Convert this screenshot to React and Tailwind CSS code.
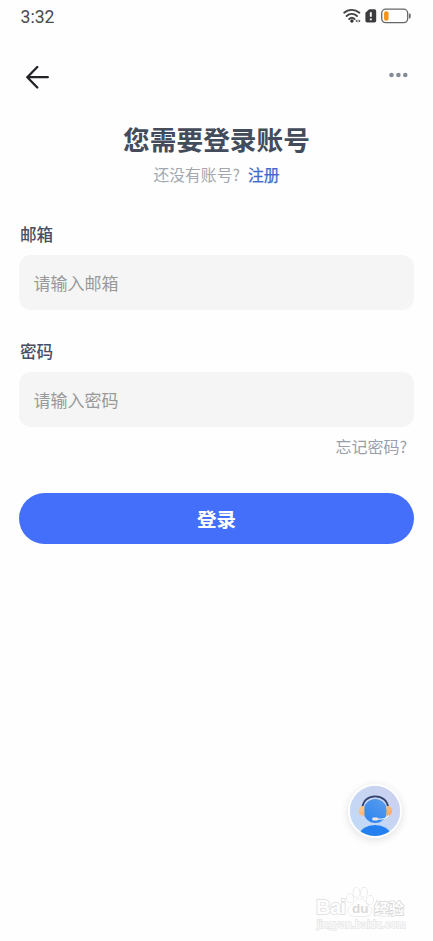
function StatusIcons() {
  return (
    <svg width="69" height="18" viewBox="0 0 69 18" fill="none">
      <g stroke="#444" strokeWidth="1.9" strokeLinecap="round">
        <path d="M2.2 5.7C6.400 1.900 13 1.900 17.400 5.700" />
        <path d="M4.600 9C7.600 6.200 12 6.200 15 9" />
        <path d="M7.200 12C8.800 10.500 11 10.500 12.600 12" />
      </g>
      <circle cx="9.900" cy="14" r="1.700" fill="#333" />
      <path d="M13.400 14l2-1.600v3.200zM18.600 14l-2-1.600v3.200z" fill="#444" />
      <path d="M27.200 2.200h5.200a1.800 1.800 0 0 1 1.800 1.800v9.700a1.800 1.800 0 0 1-1.800 1.800h-7.200a1.800 1.800 0 0 1-1.800-1.800V5.800z" fill="#3c3c3e" />
      <path d="M28.800 5.200v4.600M28.800 11.400v1.800" stroke="#fff" strokeWidth="1.900" />
      <rect x="39.700" y="2.200" width="26" height="13.400" rx="4" stroke="#666" strokeWidth="1.300" />
      <rect x="42" y="4.200" width="4.600" height="9.500" rx="2" fill="#f7941d" />
      <path d="M67.800 7.200v3.600" stroke="#666" strokeWidth="1.600" strokeLinecap="round" />
    </svg>
  );
}

function SupportAvatar() {
  return (
    <svg width="54" height="54" viewBox="2.500 2 54 54" className="rounded-full shadow-[0_2px_9px_rgba(0,0,0,0.12)]">
      <defs>
        <linearGradient id="sky" x1="0" y1="1" x2="1" y2="0">
          <stop offset="0" stopColor="#bfdcf8" />
          <stop offset="1" stopColor="#cdcfee" />
        </linearGradient>
        <linearGradient id="face" x1="1" y1="0" x2="0.2" y2="1">
          <stop offset="0" stopColor="#5c9dea" />
          <stop offset="1" stopColor="#2e85f3" />
        </linearGradient>
        <linearGradient id="pad" x1="0" y1="0" x2="1" y2="1">
          <stop offset="0" stopColor="#fbcb90" />
          <stop offset="1" stopColor="#f5a95c" />
        </linearGradient>
        <clipPath id="disc"><circle cx="29.500" cy="29" r="25" /></clipPath>
      </defs>
      <circle cx="29.500" cy="29" r="27" fill="#fff" />
      <circle cx="29.500" cy="29" r="25.200" fill="url(#sky)" />
      <g clipPath="url(#disc)">
        <ellipse cx="29.500" cy="52" rx="15" ry="9" fill="#2480ef" />
      </g>
      <ellipse cx="29.800" cy="29" rx="11.700" ry="12" fill="url(#face)" />
      <path d="M17 25.500C17.500 18.500 23 14.300 29.700 14.300S42 18.500 42.600 25.500" fill="none" stroke="#33436e" strokeWidth="1.800" />
      <path d="M18.900 24v9.600c-3.400.4-5.700-1.400-5.700-4.900s2.300-5 5.700-4.700zM40.900 24v9.600c3.400.4 5.800-1.400 5.800-4.900s-2.400-5-5.800-4.700z" fill="url(#pad)" />
      <path d="M43 33.500c-1.800 3-5 3.900-10.500 3.600" fill="none" stroke="#fff" strokeWidth="1" />
      <rect x="26.700" y="35.400" width="6" height="3" rx="1.300" fill="#f5e7df" />
    </svg>
  );
}

function Watermark() {
  return (
    <div className="flex flex-col text-[#fefefe] font-['Liberation_Sans','Noto_Sans_CJK_SC',sans-serif] [paint-order:stroke_fill]">
      <div className="flex h-[31px] items-end">
        <span className="w-[33px] pl-px text-[20px] leading-[19px] font-bold tracking-[-0.500px] [-webkit-text-stroke:1.600px_#dedede]">Bai</span>
        <svg width="24" height="30" viewBox="32.500 0 24 30" className="overflow-visible" fill="#fefefe" stroke="#dadada" strokeWidth="1">
          <ellipse cx="34.700" cy="11.300" rx="3.300" ry="4.400" transform="rotate(-12 34.700 11.300)" />
          <ellipse cx="41" cy="5.500" rx="3.200" ry="4.700" />
          <ellipse cx="48.500" cy="5.500" rx="3.300" ry="4.700" transform="rotate(8 48.500 5.500)" />
          <ellipse cx="54.500" cy="13" rx="3.200" ry="4.300" transform="rotate(12 54.500 13)" />
          <path d="M44.500 12c-4 0-5 3-7.500 5.500-2.800 2.500-4.800 4-4 7.500 1 4 4.500 4 11.500 4s10.500 0 11.500-4c.8-3.500-1.500-5-4-7.500-2.500-2.500-3.500-5.500-7.500-5.500z" />
          <text x="36.500" y="26.200" fontSize="13.500" fontWeight="700" fill="#dadada" stroke="none">du</text>
        </svg>
        <span className="pl-[2px] text-[15px] leading-[17px] font-bold whitespace-nowrap [-webkit-text-stroke:1.400px_#d6d6d6]">经验</span>
      </div>
      <span className="pl-[2px] text-[11px] leading-[15px] whitespace-nowrap [-webkit-text-stroke:1.300px_#e4e4e4]">jingyan.baidu.com</span>
    </div>
  );
}

function Field({ label, placeholder, type }) {
  return (
    <label className="flex flex-col gap-[9px]">
      <span className="pl-px text-[16.600px] leading-6 font-medium text-[#464f62]">{label}</span>
      <input
        type={type}
        placeholder={placeholder}
        className="h-[55px] w-full rounded-xl bg-[#f5f5f5] px-[14.500px] text-[17px] outline-none placeholder:text-[#999]"
      />
    </label>
  );
}

export default function App() {
  return (
    <div className="flex h-[941px] w-[433px] flex-col overflow-hidden bg-[#fefefe] font-['Noto_Sans_CJK_SC',sans-serif]">
      <header className="flex flex-col">
        <div className="flex h-8 items-center justify-between pr-[22px] pl-[20.500px]">
          <span className="pt-px font-['Roboto',sans-serif] text-[17.600px] leading-8 text-[#4a4a4a]">3:32</span>
          <StatusIcons />
        </div>
        <div className="flex h-[88px] items-center justify-between px-[25px] pt-px">
          <svg width="25" height="24" viewBox="0 0 25 24" fill="none" stroke="#222327" strokeWidth="2.300" strokeLinecap="round" strokeLinejoin="round">
            <path d="M12.300 2 2.300 12.200l10 10.300M2.300 12.200h20.500" />
          </svg>
          <svg width="19" height="6" viewBox="0 0 19 6" fill="#858c97" className="mb-1">
            <circle cx="2.500" cy="3" r="2.300" /><circle cx="9.400" cy="3" r="2.300" /><circle cx="16.300" cy="3" r="2.300" />
          </svg>
        </div>
      </header>
      <main className="flex flex-col gap-[35px]">
        <div className="flex flex-col items-center gap-[5px]">
          <h1 className="text-[26.700px] leading-[38px] font-bold text-[#434c5b]">您需要登录账号</h1>
          <p className="flex gap-2 text-[15.800px] leading-6 text-[#a2a7b0]">
            <span>还没有账号?</span>
            <a className="text-[#4169cf] [-webkit-text-stroke:0.250px_#4169cf]">注册</a>
          </p>
        </div>
        <form className="flex flex-col gap-[35px] px-[19px]">
          <div className="flex flex-col gap-[7px]">
            <div className="flex flex-col gap-[29px]">
              <Field label="邮箱" placeholder="请输入邮箱" type="text" />
              <Field label="密码" placeholder="请输入密码" type="password" />
            </div>
            <a className="self-end pr-[7px] text-[16px] leading-6 text-[#999fa9]">忘记密码?</a>
          </div>
          <button type="button" className="h-[51px] w-full rounded-full bg-[#446ffb] text-[19.500px] font-bold text-white">登录</button>
        </form>
      </main>
      <footer className="mt-auto flex flex-col items-end gap-[48px] pb-[9px]">
        <div className="pr-[31px]"><SupportAvatar /></div>
        <div className="w-[118px]"><Watermark /></div>
      </footer>
    </div>
  );
}
